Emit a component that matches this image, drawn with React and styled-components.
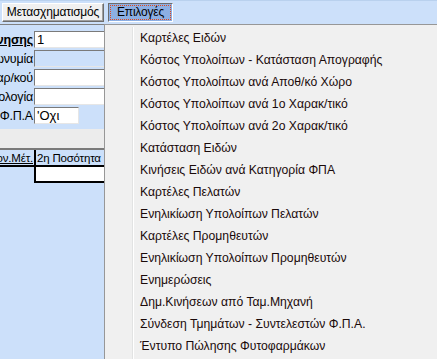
import React from "react";
import styled, { createGlobalStyle } from "styled-components";

const GlobalStyle = createGlobalStyle`
  html, body {
    margin: 0;
    padding: 0;
    overflow: hidden;
    background: #cce0fa;
  }
`;

const menuItems = [
  "Καρτέλες Ειδών",
  "Κόστος Υπολοίπων - Κατάσταση Απογραφής",
  "Κόστος Υπολοίπων ανά Αποθ/κό Χώρο",
  "Κόστος Υπολοίπων ανά 1ο Χαρακ/τικό",
  "Κόστος Υπολοίπων ανά 2ο Χαρακ/τικό",
  "Κατάσταση Ειδών",
  "Κινήσεις Ειδών ανά Κατηγορία ΦΠΑ",
  "Καρτέλες Πελατών",
  "Ενηλικίωση Υπολοίπων Πελατών",
  "Καρτέλες Προμηθευτών",
  "Ενηλικίωση Υπολοίπων Προμηθευτών",
  "Ενημερώσεις",
  "Δημ.Κινήσεων από Ταμ.Μηχανή",
  "Σύνδεση Τμημάτων - Συντελεστών Φ.Π.Α.",
  "Έντυπο Πώλησης Φυτοφαρμάκων",
];

const fields = [
  { label: "Κίνησης", value: "1", strong: true },
  { label: "Επωνυμία", value: "", disabled: true },
  { label: "Χαρ/κού", value: "" },
  { label: "Αιτιολογία", value: "" },
  { label: "Φ.Π.Α", value: "'Οχι", short: true },
];

export default function App() {
  return (
    <>
      <GlobalStyle />
      <Screen>
        <Toolbar>
          <ToolButton>Μετασχηματισμός</ToolButton>
          <ToolButton active>
            <FocusRing>Επιλογές</FocusRing>
          </ToolButton>
        </Toolbar>

        <Form>
          {fields.map((f) => (
            <FieldRow key={f.label}>
              <Label strong={f.strong}>
                <span>{f.label}</span>
              </Label>
              <Input disabled={f.disabled} short={f.short}>
                {f.value}
              </Input>
            </FieldRow>
          ))}
        </Form>

        <Strip />

        <Grid>
          <HeadCell>
            <u>Μον.Μέτ.</u>
          </HeadCell>
          <HeadCell boxed>2η Ποσότητα</HeadCell>
          <Cell />
          <Cell boxed />
        </Grid>

        <Menu>
          {menuItems.map((item) => (
            <MenuItem key={item}>{item}</MenuItem>
          ))}
        </Menu>
      </Screen>
    </>
  );
}

const Screen = styled.div`
  position: relative;
  width: 437px;
  height: 359px;
  overflow: hidden;
  background: #cce0fa;
  font-family: "Liberation Sans", Arial, sans-serif;
  color: #000;
`;

const Toolbar = styled.div`
  display: flex;
  align-items: center;
  gap: 4px;
  height: 25px;
  padding: 0 2px 1px;
  border-top: 1px solid #b9d1ee;
  border-bottom: 1px solid #808080;
  box-sizing: border-box;
`;

const ToolButton = styled.div`
  display: flex;
  align-items: center;
  justify-content: center;
  flex-shrink: 0;
  width: ${(p) => (p.active ? "65px" : "102px")};
  height: 19px;
  padding: ${(p) => (p.active ? "1px" : "0")};
  font-size: 12px;
  letter-spacing: -0.2px;
  white-space: nowrap;
  box-sizing: border-box;
  background: ${(p) => (p.active ? "#8cafe3" : "#f0f0f0")};
  border: 1px solid;
  border-color: ${(p) =>
    p.active ? "#6d6d6d #ffffff #ffffff #6d6d6d" : "#ffffff #6d6d6d #6d6d6d #ffffff"};
  box-shadow: ${(p) => (p.active ? "none" : "inset -1px -1px 0 #a0a0a0")};
`;

const FocusRing = styled.span`
  display: flex;
  align-items: center;
  justify-content: center;
  width: 100%;
  height: 100%;
  box-sizing: border-box;
  border: 1px dotted #e2471a;
`;

const Form = styled.div`
  display: flex;
  flex-direction: column;
  gap: 2px;
  padding-top: 6px;
`;

const FieldRow = styled.div`
  display: flex;
  align-items: center;
  height: 17px;
`;

const Label = styled.div`
  width: 34px;
  overflow: hidden;
  display: flex;
  justify-content: flex-end;
  white-space: nowrap;
  font-size: 12.5px;
  letter-spacing: -0.2px;
  font-weight: ${(p) => (p.strong ? "bold" : "normal")};
  text-decoration: ${(p) => (p.strong ? "underline" : "none")};
  color: #000;
  span {
    flex-shrink: 0;
    padding-right: 1px;
  }
`;

const Input = styled.div`
  width: ${(p) => (p.short ? "45px" : "90px")};
  height: 17px;
  box-sizing: border-box;
  padding: 0 2px;
  font-size: 13px;
  line-height: 15px;
  background: ${(p) => (p.disabled ? "#cce0fa" : "#ffffff")};
  border: 1px solid;
  border-color: #7a7a7a #e6e6e6 #e6e6e6 #7a7a7a;
`;

const Strip = styled.div`
  margin-top: 5px;
  height: 19px;
  background: #ececec;
  border-bottom: 2px solid #7a7a7a;
`;

const Grid = styled.div`
  display: grid;
  grid-template-columns: 34px 80px;
  grid-template-rows: 17px 16px;
  font-size: 11.5px;
  letter-spacing: -0.2px;
`;

const HeadCell = styled.div`
  display: flex;
  align-items: center;
  justify-content: ${(p) => (p.boxed ? "flex-start" : "flex-end")};
  overflow: hidden;
  white-space: nowrap;
  padding: 0 1px;
  background: #cce0fa;
  border-left: ${(p) => (p.boxed ? "2px solid #000" : "none")};
  border-bottom: 2px solid #000;
  u {
    flex-shrink: 0;
  }
`;

const Cell = styled.div`
  background: ${(p) => (p.boxed ? "#ffffff" : "#cce0fa")};
  border-left: ${(p) => (p.boxed ? "2px solid #000" : "none")};
  border-bottom: ${(p) => (p.boxed ? "2px solid #000" : "none")};
`;

const Menu = styled.div`
  position: absolute;
  left: 104px;
  top: 24px;
  right: -4px;
  bottom: -4px;
  padding-top: 2px;
  background: #f0f0f0;
  border: 1px solid #979797;
  box-sizing: border-box;
  display: flex;
  flex-direction: column;
  &::before {
    content: "";
    position: absolute;
    left: 27px;
    top: 2px;
    bottom: 0;
    width: 1px;
    background: #e2e3e3;
    box-shadow: 1px 0 0 #ffffff;
  }
`;

const MenuItem = styled.div`
  height: 22px;
  display: flex;
  align-items: center;
  padding-left: 35px;
  font-size: 12.2px;
  color: #1a0a0a;
  white-space: nowrap;
`;
